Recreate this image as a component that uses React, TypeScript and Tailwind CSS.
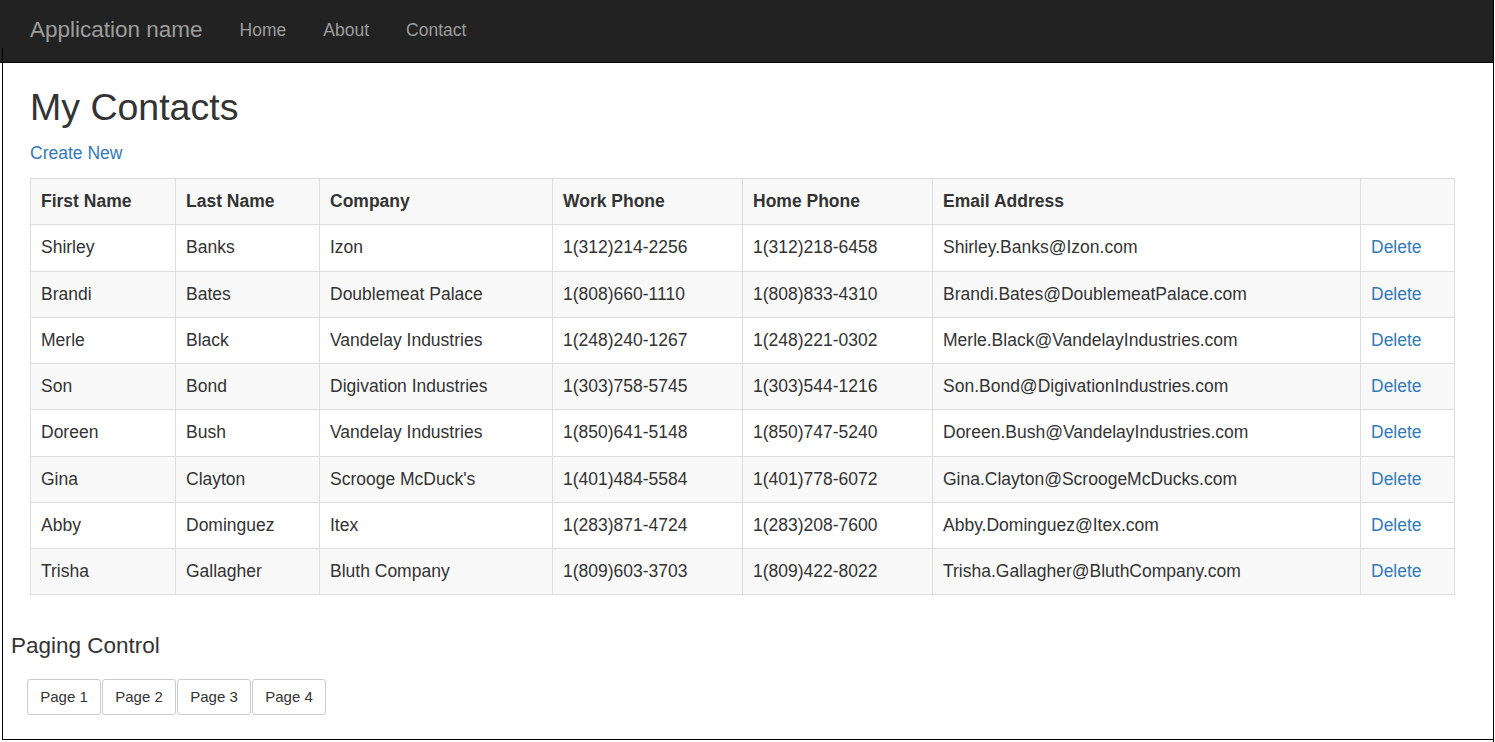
const contacts = [
  ['Shirley', 'Banks', 'Izon', '1(312)214-2256', '1(312)218-6458', 'Shirley.Banks@Izon.com'],
  ['Brandi', 'Bates', 'Doublemeat Palace', '1(808)660-1110', '1(808)833-4310', 'Brandi.Bates@DoublemeatPalace.com'],
  ['Merle', 'Black', 'Vandelay Industries', '1(248)240-1267', '1(248)221-0302', 'Merle.Black@VandelayIndustries.com'],
  ['Son', 'Bond', 'Digivation Industries', '1(303)758-5745', '1(303)544-1216', 'Son.Bond@DigivationIndustries.com'],
  ['Doreen', 'Bush', 'Vandelay Industries', '1(850)641-5148', '1(850)747-5240', 'Doreen.Bush@VandelayIndustries.com'],
  ['Gina', 'Clayton', "Scrooge McDuck's", '1(401)484-5584', '1(401)778-6072', 'Gina.Clayton@ScroogeMcDucks.com'],
  ['Abby', 'Dominguez', 'Itex', '1(283)871-4724', '1(283)208-7600', 'Abby.Dominguez@Itex.com'],
  ['Trisha', 'Gallagher', 'Bluth Company', '1(809)603-3703', '1(809)422-8022', 'Trisha.Gallagher@BluthCompany.com'],
]

const headers = ['First Name', 'Last Name', 'Company', 'Work Phone', 'Home Phone', 'Email Address', '']
const widths = ['w-[145px]', 'w-[144px]', 'w-[233px]', 'w-[190px]', 'w-[190px]', 'w-[428px]', 'w-[94px]']

export default function App() {
  return (
    <div
      className="relative h-[742px] w-[1494px] overflow-hidden border-r border-black bg-white text-[17.5px] text-[#333]"
      style={{ fontFamily: '"Liberation Sans", Arial, sans-serif' }}
    >
      <nav className="flex h-[63px] items-center border-b border-black bg-[#222] pb-[2px] pl-[30px]">
        <span className="text-[22.5px] text-[#9d9d9d]">Application name</span>
        <div className="ml-[37px] flex gap-[37px] text-[17.5px] text-[#9d9d9d]">
          <span>Home</span>
          <span>About</span>
          <span>Contact</span>
        </div>
      </nav>

      <div className="px-[30px]">
        <h2 className="mt-[24px] mb-[13px] text-[37.5px] leading-[41px]">My Contacts</h2>
        <p className="mb-[12px] leading-[25px]">
          <a className="text-[#337ab7]">Create New</a>
        </p>

        <table className="w-[1424px] table-fixed border-collapse border border-[#ddd]">
          <tbody>
            <tr className="bg-[#f9f9f9]">
              {headers.map((h, i) => (
                <th
                  key={i}
                  className={`${widths[i]} border border-[#ddd] px-[10px] py-[10px] text-left font-bold leading-[25.25px]`}
                >
                  {h}
                </th>
              ))}
            </tr>
            {contacts.map((row, r) => (
              <tr key={r} className={r % 2 === 1 ? 'bg-[#f9f9f9]' : 'bg-white'}>
                {row.map((cell, c) => (
                  <td key={c} className="border border-[#ddd] px-[10px] py-[10px] leading-[25.25px]">
                    {cell}
                  </td>
                ))}
                <td className="border border-[#ddd] px-[10px] py-[10px] leading-[25.25px]">
                  <a className="text-[#337ab7]">Delete</a>
                </td>
              </tr>
            ))}
          </tbody>
        </table>
      </div>

      <h4 className="mt-[38px] ml-[11px] text-[22.5px] leading-[25px]">Paging Control</h4>
      <div className="mt-[21px] ml-[27px] flex gap-px">
        {['Page 1', 'Page 2', 'Page 3', 'Page 4'].map((p) => (
          <button
            key={p}
            className="h-[36px] w-[74px] rounded-[3px] border border-[#ccc] bg-white text-[15px] text-[#333]"
          >
            {p}
          </button>
        ))}
      </div>

      <div className="absolute top-[48px] bottom-[2px] left-[2px] w-px bg-black" />
      <div className="absolute right-0 bottom-[2px] left-[2px] h-px bg-black" />
    </div>
  )
}
